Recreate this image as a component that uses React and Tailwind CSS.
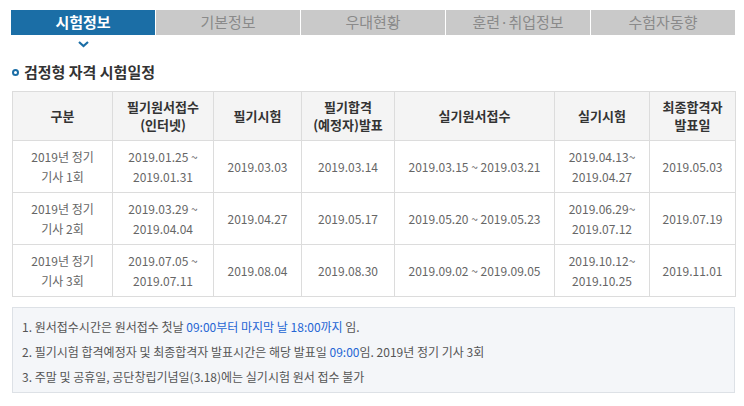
import React from "react";

const tabs = ["시험정보", "기본정보", "우대현황", "훈련·취업정보", "수험자동향"];

const rows = [
	{
		kind: ["2019년 정기", "기사 1회"],
		apply: ["2019.01.25 ~", "2019.01.31"],
		written: "2019.03.03",
		pass: "2019.03.14",
		practApply: "2019.03.15 ~ 2019.03.21",
		pract: ["2019.04.13~", "2019.04.27"],
		final: "2019.05.03",
	},
	{
		kind: ["2019년 정기", "기사 2회"],
		apply: ["2019.03.29 ~", "2019.04.04"],
		written: "2019.04.27",
		pass: "2019.05.17",
		practApply: "2019.05.20 ~ 2019.05.23",
		pract: ["2019.06.29~", "2019.07.12"],
		final: "2019.07.19",
	},
	{
		kind: ["2019년 정기", "기사 3회"],
		apply: ["2019.07.05 ~", "2019.07.11"],
		written: "2019.08.04",
		pass: "2019.08.30",
		practApply: "2019.09.02 ~ 2019.09.05",
		pract: ["2019.10.12~", "2019.10.25"],
		final: "2019.11.01",
	},
];

const th = "border border-[#dcdcdc] font-bold text-[13px] leading-[18px] text-[#333] text-center align-middle";
const td = "border border-[#dcdcdc] text-[12px] leading-[20px] text-[#666] text-center align-middle";

function Lines({ items }) {
	return items.map((t, i) => <div key={i}>{t}</div>);
}

export default function App() {
	return (
		<div
			className="w-[744px] h-[406px] bg-white pt-[10px] px-[11px]"
			style={{ fontFamily: '"Noto Sans CJK KR", "Noto Sans", sans-serif' }}
		>
			{/* Tabs */}
			<div className="flex gap-px w-[724px]">
				{tabs.map((t, i) => (
					<div
						key={t}
						className={
							i === 0
								? "w-[144px] h-[25px] flex items-center justify-center bg-[#1b6ea6] text-white font-bold text-[15px]"
								: "w-[144px] h-[25px] flex items-center justify-center bg-[#c9c9c9] text-[#8a8a8a] text-[15px]"
						}
					>
						{t}
					</div>
				))}
			</div>
			<div className="w-[144px] h-[14px] flex justify-center pt-[6px]">
				<svg width="11" height="7" viewBox="0 0 11 7">
					<path d="M1 1 L5.5 5 L10 1" stroke="#1b6ea6" strokeWidth="2.2" fill="none" />
				</svg>
			</div>

			{/* Title */}
			<div className="flex items-center gap-[5px] mt-[13px] pl-[1px]">
				<span className="w-[7px] h-[7px] rounded-full border-2 border-[#1b6ea6]" />
				<span className="text-[15px] font-bold text-[#333] leading-[20px]">검정형 자격 시험일정</span>
			</div>

			{/* Table */}
			<table className="mt-[9px] ml-px w-[723px] border-collapse table-fixed">
				<colgroup>
					<col className="w-[100px]" />
					<col className="w-[101px]" />
					<col className="w-[88px]" />
					<col className="w-[93px]" />
					<col className="w-[160px]" />
					<col className="w-[95px]" />
					<col className="w-[86px]" />
				</colgroup>
				<thead>
					<tr className="h-[49px] bg-[#f4f4f4]">
						<th className={th}>구분</th>
						<th className={th}>
							필기원서접수
							<br />
							(인터넷)
						</th>
						<th className={th}>필기시험</th>
						<th className={th}>
							필기합격
							<br />
							(예정자)발표
						</th>
						<th className={th}>실기원서접수</th>
						<th className={th}>실기시험</th>
						<th className={th}>
							최종합격자
							<br />
							발표일
						</th>
					</tr>
				</thead>
				<tbody>
					{rows.map((r, i) => (
						<tr key={i} className="h-[52px]">
							<td className={td}>
								<Lines items={r.kind} />
							</td>
							<td className={td}>
								<Lines items={r.apply} />
							</td>
							<td className={td}>{r.written}</td>
							<td className={td}>{r.pass}</td>
							<td className={td}>{r.practApply}</td>
							<td className={td}>
								<Lines items={r.pract} />
							</td>
							<td className={td}>{r.final}</td>
						</tr>
					))}
				</tbody>
			</table>

			{/* Notes */}
			<div className="mt-[10px] ml-px w-[723px] h-[86px] bg-[#f4f6f9] border border-[#dde1e6] px-[9px] pt-[6px] text-[12px] text-[#555] leading-[25px]">
				<div>
					1. 원서접수시간은 원서접수 첫날 <span className="text-[#2565d4]">09:00부터 마지막 날 18:00까지</span> 임.
				</div>
				<div>
					2. 필기시험 합격예정자 및 최종합격자 발표시간은 해당 발표일 <span className="text-[#2565d4]">09:00</span>임. 2019년 정기 기사 3회
				</div>
				<div>3. 주말 및 공휴일, 공단창립기념일(3.18)에는 실기시험 원서 접수 불가</div>
			</div>
		</div>
	);
}
